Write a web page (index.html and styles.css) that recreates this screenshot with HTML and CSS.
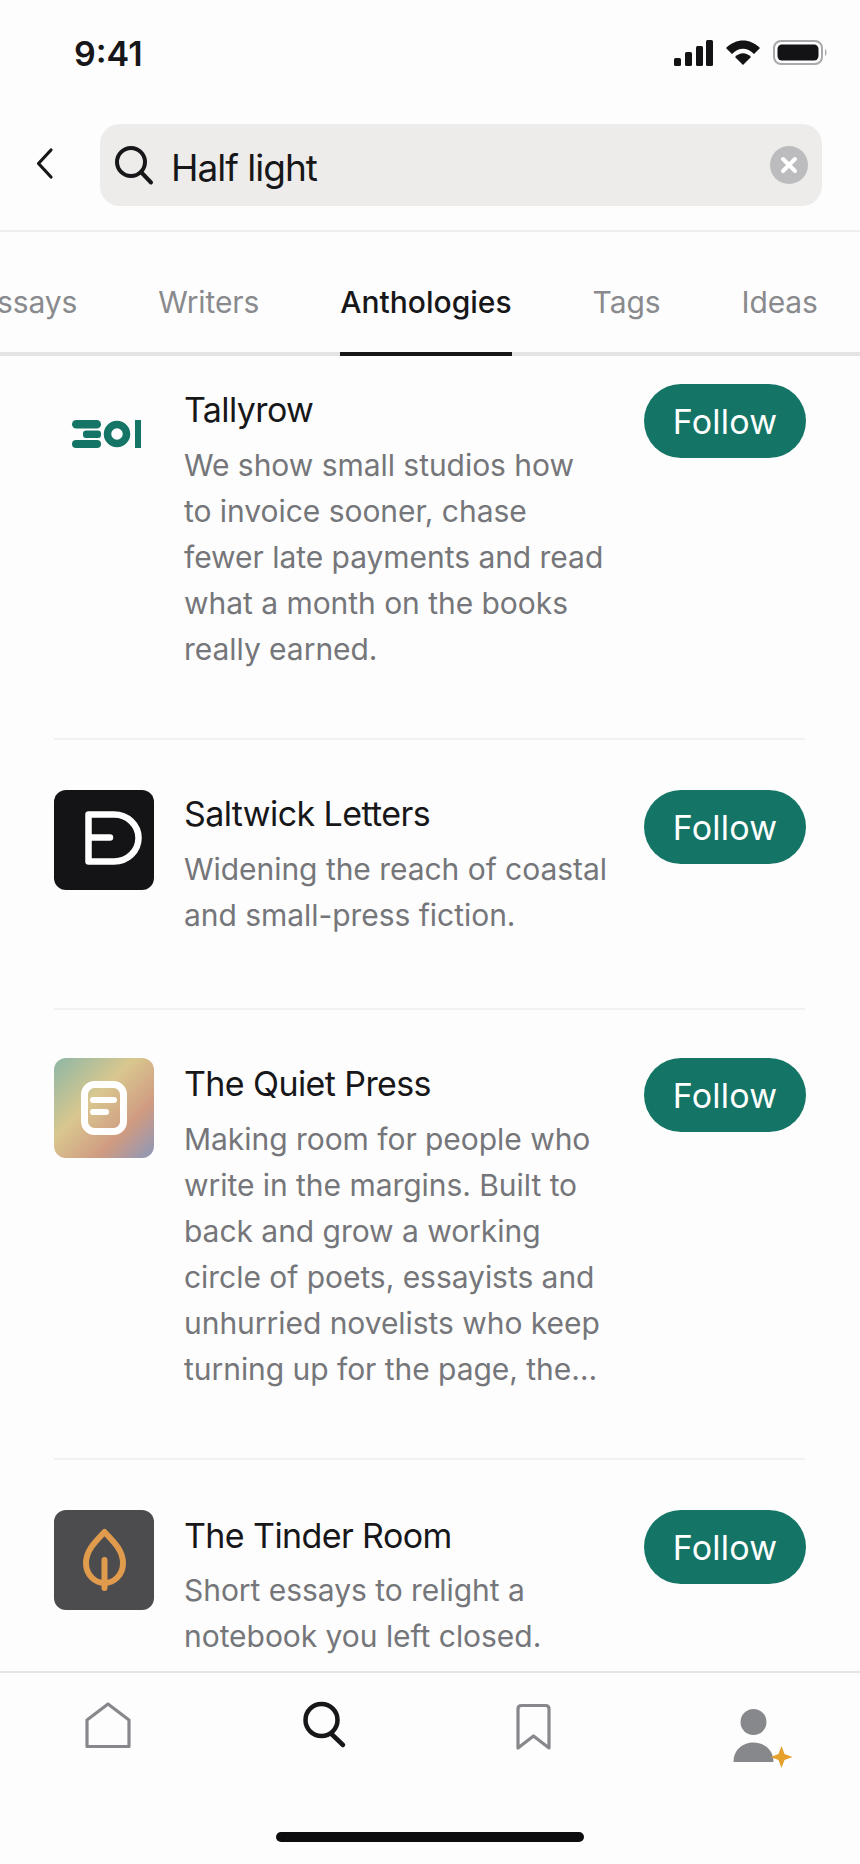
FILE: index.html
```html
<!DOCTYPE html>
<html>
<head>
<meta charset="utf-8">
<title>Search</title>
<link rel="stylesheet" href="styles.css">
</head>
<body>
<div class="screen">
  <div class="statusBar">
    <span class="time">9:41</span>
    <div class="statusIcons">
      <svg width="39" height="26" viewBox="0 0 39 26"><rect x="0" y="18" width="7" height="8" rx="1.5"/><rect x="11" y="12" width="7" height="14" rx="1.5"/><rect x="22" y="6" width="7" height="20" rx="1.5"/><rect x="32" y="0" width="7" height="26" rx="1.5"/></svg>
      <svg width="34" height="25" viewBox="0 0 34 25"><path d="M0 8 C10 -2 24 -2 34 8 L28 14 C21 7 13 7 6 14 Z"/><path d="M9 17 C14 12 20 12 25 17 L17 25 Z"/></svg>
      <svg width="54" height="25" viewBox="0 0 54 25"><rect x="1" y="1" width="48" height="23" rx="7" fill="none" stroke="#a9a9ab" stroke-width="2"/><rect x="4.5" y="4.5" width="41" height="16" rx="4.5"/><path d="M52 9 C54 10 54 15 52 16 Z" fill="#a9a9ab"/></svg>
    </div>
  </div>

  <div class="searchRow">
    <svg class="backIcon" width="17" height="31" viewBox="0 0 17 31"><path d="M15 2 L2.500 15.500 L15 29" fill="none" stroke="#17171a" stroke-width="3.200" stroke-linecap="round" stroke-linejoin="round"/></svg>
    <div class="searchBox">
      <svg width="38" height="38" viewBox="0 0 38 38"><circle cx="16" cy="16" r="14" fill="none" stroke="#17171a" stroke-width="4"/><path d="M26 26 L36 36.500" stroke="#17171a" stroke-width="4" stroke-linecap="round"/></svg>
      <span class="searchText">Half light</span>
      <svg class="clearIcon" width="38" height="38" viewBox="0 0 38 38"><circle cx="19" cy="19" r="19" fill="#bcbcbe"/><path d="M13 13 L25 25 M25 13 L13 25" stroke="#fff" stroke-width="4" stroke-linecap="round"/></svg>
    </div>
  </div>

  <div class="tabs">
    <span class="tab">Essays</span>
    <span class="tab">Writers</span>
    <span class="tab active">Anthologies</span>
    <span class="tab">Tags</span>
    <span class="tab">Ideas</span>
  </div>

  <div class="list">
    <div class="row rowFirst">
      <div class="logo">
        <svg width="100" height="100" viewBox="0 0 100 100"><g fill="#147566"><rect x="18" y="36" width="29" height="8.500" rx="4.250"/><rect x="29" y="46.500" width="18" height="7.500" rx="3"/><rect x="18" y="56" width="29" height="8" rx="4"/><rect x="81" y="36" width="6" height="28"/></g><circle cx="63" cy="50" r="9.500" fill="none" stroke="#147566" stroke-width="7.500"/></svg>
      </div>
      <div class="rowText">
        <div class="rowTitle">Tallyrow</div>
        <div class="rowDesc">We show small studios how<br>to invoice sooner, chase<br>fewer late payments and read<br>what a month on the books<br>really earned.</div>
      </div>
      <div class="followBtn">Follow</div>
    </div>

    <div class="row">
      <div class="logo logoBlack">
        <svg width="100" height="100" viewBox="0 0 100 100"><path d="M34.500 24.500 H60 A24 23 0 0 1 60 71.500 H34.500 Z M34.500 47.500 H56" fill="none" stroke="#fff" stroke-width="6.500" stroke-linecap="round" stroke-linejoin="round"/></svg>
      </div>
      <div class="rowText">
        <div class="rowTitle">Saltwick Letters</div>
        <div class="rowDesc">Widening the reach of coastal<br>and small-press fiction.</div>
      </div>
      <div class="followBtn">Follow</div>
    </div>

    <div class="row rowThird">
      <div class="logo logoGradient">
        <svg width="100" height="100" viewBox="0 0 100 100"><rect x="30.500" y="26.500" width="39" height="47" rx="10" fill="none" stroke="#fff" stroke-width="7"/><path d="M39 42 H60 M39 54 H52" stroke="#fff" stroke-width="6" stroke-linecap="round"/></svg>
      </div>
      <div class="rowText">
        <div class="rowTitle">The Quiet Press</div>
        <div class="rowDesc">Making room for people who<br>write in the margins. Built to<br>back and grow a working<br>circle of poets, essayists and<br>unhurried novelists who keep<br>turning up for the page, the…</div>
      </div>
      <div class="followBtn">Follow</div>
    </div>

    <div class="row rowLast">
      <div class="logo logoGrey">
        <svg width="100" height="100" viewBox="0 0 100 100"><path d="M50.500 22 C40 33 32 41 32 53 C32 65 41 73 50.500 73 C60 73 69 65 69 53 C69 41 61 33 50.500 22 Z M50.500 50 V78" fill="none" stroke="#e09c4c" stroke-width="6" stroke-linecap="round" stroke-linejoin="round"/></svg>
      </div>
      <div class="rowText">
        <div class="rowTitle">The Tinder Room</div>
        <div class="rowDesc">Short essays to relight a<br>notebook you left closed.</div>
      </div>
      <div class="followBtn">Follow</div>
    </div>
  </div>

  <div class="bottomNav">
    <div class="navIcons">
      <div class="navItem">
        <svg width="60" height="60" viewBox="0 0 60 60"><path d="M30 9 L9 25 V51.500 H51 V25 Z" fill="none" stroke="#87888b" stroke-width="3.200" stroke-linejoin="round"/></svg>
      </div>
      <div class="navItem">
        <svg width="60" height="60" viewBox="0 0 60 60"><circle cx="28.500" cy="25" r="16" fill="none" stroke="#17171a" stroke-width="4.500"/><path d="M38.500 39 L50 50" stroke="#17171a" stroke-width="4.500" stroke-linecap="round"/></svg>
      </div>
      <div class="navItem">
        <svg width="60" height="60" viewBox="0 0 60 60"><path d="M10 53 V14 Q10 10.500 13.500 10.500 H37.500 Q41 10.500 41 14 V53 L25.500 41 Z" fill="none" stroke="#87888b" stroke-width="3.200" stroke-linejoin="round"/></svg>
      </div>
      <div class="navItem">
        <svg width="60" height="60" viewBox="0 0 60 60"><circle cx="30.500" cy="27" r="13" fill="#87888b"/><path d="M10.500 67 C10.500 41 50.500 41 50.500 67 Z" fill="#87888b"/><path d="M58.500 51 L61.500 59 L69.500 62 L61.500 65 L58.500 73 L55.500 65 L47.500 62 L55.500 59 Z" fill="#e5a02e"/></svg>
      </div>
    </div>
    <div class="homeBar"></div>
  </div>
</div>
</body>
</html>
```

FILE: styles.css
```css
html, body {
    margin: 0;
    padding: 0;
}
body {
    background: #fdfdfd;
    font-family: "Inter", "Liberation Sans", sans-serif;
    color: #17171a;
}
.screen {
    width: 860px;
    height: 1864px;
    display: flex;
    flex-direction: column;
    overflow: hidden;
}
svg {
    display: block;
    flex-shrink: 0;
    overflow: visible;
}

.statusBar {
    height: 124px;
    padding: 40px 33px 0 74px;
    box-sizing: border-box;
    display: flex;
    justify-content: space-between;
    align-items: flex-start;
}
.time {
    font-size: 34px;
    font-weight: 600;
    line-height: 28px;
}
.statusIcons {
    display: flex;
    gap: 13px;
    fill: #131316;
}

.searchRow {
    height: 106px;
    padding: 0 38px 0 36px;
    display: flex;
    align-items: flex-start;
    gap: 47px;
    border-bottom: 2px solid #eeeeee;
}
.backIcon {
    margin-top: 24px;
}
.searchBox {
    flex: 1;
    height: 82px;
    background: #edecea;
    border-radius: 20px;
    display: flex;
    align-items: center;
    padding: 0 14px 0 15px;
}
.searchText {
    font-size: 37px;
    margin-left: 18px;
    margin-top: 4px;
    flex: 1;
    letter-spacing: -1px;
}

.tabs {
    height: 124px;
    box-sizing: border-box;
    border-bottom: 4px solid #e4e4e4;
    display: flex;
    gap: 81px;
    margin-left: -21px;
    width: 881px;
}
.tab {
    font-size: 30px;
    line-height: 40px;
    padding-top: 50px;
    letter-spacing: -0.1px;
    color: #898a8d;
    height: 124px;
    box-sizing: border-box;
}
.tab.active {
    color: #17171a;
    font-weight: 500;
    letter-spacing: 0;
    border-bottom: 4px solid #17171a;
}

.list {
    flex: 1;
    min-height: 0;
    overflow: hidden;
    padding-top: 30px;
}
.row {
    display: flex;
    align-items: flex-start;
    margin: 0 55px 0 54px;
    padding: 50px 0 70px;
    border-bottom: 2px solid #f1f1f1;
}
.rowFirst {
    padding-top: 0;
    padding-bottom: 66px;
}
.rowFirst .logo, .rowFirst .followBtn {
    margin-top: -2px;
}
.rowThird {
    padding-top: 48px;
    padding-bottom: 68px;
}
.rowThird .rowText {
    margin-bottom: -2px;
    padding-top: 3px;
}
.rowLast {
    border-bottom: none;
}
.rowLast .rowText {
    padding-top: 3px;
}
.rowLast .rowTitle {
    margin-bottom: 8px;
}
.logo {
    width: 100px;
    height: 100px;
    border-radius: 12px;
    flex-shrink: 0;
    overflow: hidden;
}
.logoBlack {
    background: #141416;
}
.logoGradient {
    background: linear-gradient(135deg, #8db7a5 0%, #d9c78e 40%, #cf9a82 72%, #8b98bb 100%);
}
.logoGrey {
    background: #4c4c4e;
}
.rowText {
    flex: 1;
    margin-left: 30px;
    padding-top: 1px;
}
.rowTitle {
    font-size: 34px;
    line-height: 46px;
    letter-spacing: -0.6px;
    margin-bottom: 9px;
    color: #17171a;
}
.rowDesc {
    font-size: 30px;
    line-height: 46px;
    letter-spacing: -0.04px;
    color: #75767a;
}
.followBtn {
    width: 162px;
    height: 74px;
    margin-right: -1px;
    background: #147566;
    border-radius: 37px;
    color: #fff;
    font-size: 34px;
    letter-spacing: 0.2px;
    line-height: 76px;
    text-align: center;
    flex-shrink: 0;
}

.bottomNav {
    height: 193px;
    box-sizing: border-box;
    border-top: 2px solid #e5e5e5;
    background: #fdfdfd;
    flex-shrink: 0;
    display: flex;
    flex-direction: column;
    align-items: center;
}
.navIcons {
    width: 860px;
    display: grid;
    grid-template-columns: repeat(4, 215px);
    height: 159px;
    padding-top: 22px;
    box-sizing: border-box;
}
.navItem {
    display: flex;
    justify-content: center;
}
.homeBar {
    width: 308px;
    height: 10px;
    border-radius: 5px;
    background: #0d0d0f;
}
```
